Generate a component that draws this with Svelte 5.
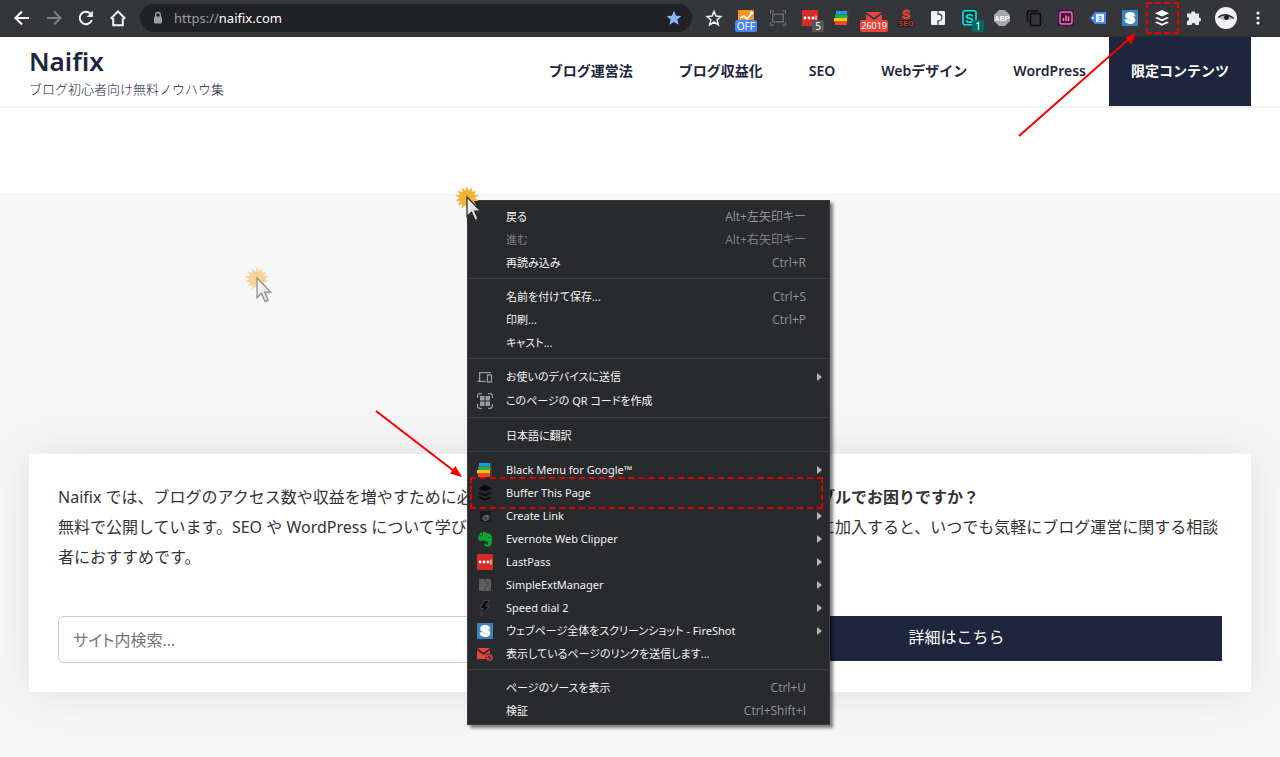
<script lang="ts">
  interface MenuItem {
    label: string;
    icon?: string;
    shortcut?: string;
    disabled?: boolean;
    submenu?: boolean;
    tall?: boolean;
    marked?: boolean;
  }

  const groups: MenuItem[][] = [
    [
      { label: "戻る", shortcut: "Alt+左矢印キー" },
      { label: "進む", shortcut: "Alt+右矢印キー", disabled: true },
      { label: "再読み込み", shortcut: "Ctrl+R" },
    ],
    [
      { label: "名前を付けて保存...", shortcut: "Ctrl+S" },
      { label: "印刷...", shortcut: "Ctrl+P" },
      { label: "キャスト..." },
    ],
    [
      { label: "お使いのデバイスに送信", icon: "devices", submenu: true },
      { label: "このページの QR コードを作成", icon: "qr", tall: true },
    ],
    [{ label: "日本語に翻訳" }],
    [
      { label: "Black Menu for Google™", icon: "blackmenu", submenu: true },
      { label: "Buffer This Page", icon: "buffer", marked: true },
      { label: "Create Link", icon: "createlink", submenu: true },
      { label: "Evernote Web Clipper", icon: "evernote", submenu: true },
      { label: "LastPass", icon: "lastpass", submenu: true },
      { label: "SimpleExtManager", icon: "extmanager", submenu: true },
      { label: "Speed dial 2", icon: "speeddial", submenu: true },
      { label: "ウェブページ全体をスクリーンショット - FireShot", icon: "fireshot", submenu: true },
      { label: "表示しているページのリンクを送信します...", icon: "mailblock" },
    ],
    [
      { label: "ページのソースを表示", shortcut: "Ctrl+U" },
      { label: "検証", shortcut: "Ctrl+Shift+I" },
    ],
  ];

  const navButtons = ["back", "forward", "reload", "home"];

  const extensions: { icon: string; badge?: string; tone?: string; marked?: boolean }[] = [
    { icon: "star" },
    { icon: "analytics", badge: "OFF", tone: "blue" },
    { icon: "capture" },
    { icon: "lastpass", badge: "5", tone: "gray" },
    { icon: "blackmenu" },
    { icon: "mail", badge: "26019", tone: "red" },
    { icon: "seo" },
    { icon: "extlight" },
    { icon: "similar", badge: "1", tone: "teal" },
    { icon: "abp" },
    { icon: "copy" },
    { icon: "stats" },
    { icon: "tag" },
    { icon: "fireshot" },
    { icon: "bufferlight", marked: true },
    { icon: "puzzle" },
    { icon: "avatar" },
    { icon: "more" },
  ];

  const links = ["ブログ運営法", "ブログ収益化", "SEO", "Webデザイン", "WordPress"];

  // Spiky burst behind the pointer
  const burst = Array.from({ length: 28 }, (_, i) => {
    const r = i % 2 ? 7.5 : 12;
    const a = (i * Math.PI) / 14;
    return `${(14 + r * Math.sin(a)).toFixed(1)},${(14 - r * Math.cos(a)).toFixed(1)}`;
  }).join(" ");
</script>

{#snippet glyph(name: string)}
  <svg class="glyph" viewBox="0 0 16 16" aria-hidden="true">
    {#if name === "back"}
      <path d="M15 8H2M8 1.5 1.5 8 8 14.5" fill="none" stroke="#fff" stroke-width="2" />
    {:else if name === "forward"}
      <path d="M1 8h13M8 1.5 14.5 8 8 14.5" fill="none" stroke="#808185" stroke-width="2" />
    {:else if name === "reload"}
      <path d="M13.8 10A6.2 6.2 0 1 1 12.4 3.6" fill="none" stroke="#f1f3f4" stroke-width="2" />
      <path d="M14.8.8V7H8.6z" fill="#f1f3f4" />
    {:else if name === "home"}
      <path d="M3.2 8v7.2h9.6V8M.8 8.8 8 1.4l7.2 7.4" fill="none" stroke="#f1f3f4" stroke-width="2" />
    {:else if name === "lock"}
      <rect x="4" y="6.5" width="8" height="7" rx="1" fill="#9aa0a6" />
      <path d="M5.700 7V4.800a2.300 2.300 0 0 1 4.600 0V7" fill="none" stroke="#9aa0a6" stroke-width="1.300" />
    {:else if name === "starfill"}
      <path d="m8 .8 2.1 4.9 5.3.4-4 3.5 1.2 5.2L8 12l-4.6 2.8 1.2-5.2-4-3.5 5.3-.4z" fill="#8ab4f8" />
    {:else if name === "star"}
      <path d="m8 1.4 1.900 4.700 5 .4-3.800 3.300 1.200 5L8 12l-4.300 2.800 1.200-5L1.100 6.500l5-.4z" fill="none" stroke="#f1f3f4" stroke-width="1.500" />
    {:else if name === "analytics"}
      <rect width="16" height="16" rx="1" fill="#f6931e" />
      <path d="m2 8 4-2 3 3 5-6" fill="none" stroke="#fff" stroke-width="1.8" />
      <circle cx="13.6" cy="3" r="1.7" fill="#fff" />
    {:else if name === "capture"}
      <path d="M.5 4V.8H4M12 .8h3.500V4M15.500 12v3.200H12M4 15.200H.5V12" fill="none" stroke="#6d6e71" stroke-width="1.200" />
      <rect x="2.700" y="4.200" width="10.600" height="7.600" fill="none" stroke="#6d6e71" stroke-width="1.400" />
    {:else if name === "lastpass"}
      <rect width="16" height="16" rx="1" fill="#d32d27" />
      <circle cx="3" cy="8" r="1.400" fill="#fff" />
      <circle cx="7" cy="8" r="1.400" fill="#fff" />
      <circle cx="11" cy="8" r="1.400" fill="#fff" />
      <path d="M14 5.500v5" stroke="#fff" stroke-width="1" />
    {:else if name === "blackmenu"}
      <rect x="3" y="1" width="12" height="14" rx="1" fill="#3c3d3e" />
      <path d="M2 1h11v3.500H2z" fill="#2196f3" />
      <path d="M1 4.500h12L14 8H1.500z" fill="#1fb141" />
      <path d="M0 8h13v3.500H0z" fill="#ffc107" />
      <path d="M1 11.500h12V15H1z" fill="#f4422f" />
    {:else if name === "mail"}
      <rect y="2" width="16" height="12" fill="#e8453c" />
      <path d="m0 3 8 6 8-6" fill="none" stroke="#35363a" stroke-width="1.600" />
    {:else if name === "mailblock"}
      <rect y="2" width="13" height="11" fill="#e8453c" />
      <path d="m0 3 6.500 5L13 3" fill="none" stroke="#292a2d" stroke-width="1.600" />
      <circle cx="12.500" cy="11.500" r="4" fill="#292a2d" />
      <circle cx="12.500" cy="11.500" r="2.600" fill="none" stroke="#e8453c" stroke-width="1.200" />
      <path d="m10.700 13.300 3.600-3.600" stroke="#e8453c" />
    {:else if name === "seo"}
      <text x="8" y="9" text-anchor="middle" font-size="12" font-weight="700" fill="#d9422f" stroke="#d9422f">S</text>
      <text x="8" y="15.500" text-anchor="middle" font-size="7" font-weight="700" fill="#d9422f" stroke="#111" stroke-width="1.500" paint-order="stroke">SEO</text>
    {:else if name === "extlight"}
      <rect x="1" y="1" width="14" height="14" rx="1" fill="#f1f3f4" />
      <path d="M8 1v3c3 0 4 1.500 4 3.500S10 11 8 11v4" fill="none" stroke="#45464a" stroke-width="1.300" />
    {:else if name === "extmanager"}
      <rect x="2" y="2" width="12" height="12" rx="1" fill="#5d5d5e" />
      <path d="M8 2v2c2 0 3 2 3 3.500S9.500 11 8 11v3" fill="none" stroke="#414244" stroke-width="1" />
    {:else if name === "similar"}
      <rect x="1" y=".8" width="13" height="14" rx="2" fill="#12383b" stroke="#11dfe2" stroke-width="1.600" />
      <text x="7.500" y="12.500" text-anchor="middle" font-size="13" font-weight="700" fill="#11e7e6">S</text>
    {:else if name === "abp"}
      <path d="M5 0h6l5 5v6l-5 5H5l-5-5V5z" fill="#a6a7a9" />
      <text x="8" y="10.500" text-anchor="middle" font-size="7" font-weight="700" fill="#fff">ABP</text>
    {:else if name === "copy"}
      <rect x="4.500" y="3.500" width="10" height="12" rx="1" fill="none" stroke="#0c0c0d" stroke-width="1.500" />
      <path d="M1.500 12V1H12" fill="none" stroke="#0c0c0d" stroke-width="1.500" />
    {:else if name === "stats"}
      <rect width="16" height="16" rx="1" fill="#4b0b55" />
      <rect x="2" y="2" width="12" height="12" rx="2" fill="none" stroke="#e57c8c" stroke-width="1.400" />
      <path d="M5.500 11V8M8 11V5.500M10.500 11V6.500" stroke="#f8a06c" stroke-width="1.400" />
    {:else if name === "tag"}
      <path d="M5 2h11v12H5L0 8z" fill="#4688f1" />
      <rect x="6" y="4" width="8" height="8" fill="#e8f0fe" />
      <circle cx="3" cy="8" r="1" fill="#fff" />
      <text x="10" y="10.700" text-anchor="middle" font-size="7" font-weight="700" fill="#4688f1">3</text>
    {:else if name === "fireshot"}
      <rect width="16" height="16" fill="#3f82bb" />
      <text x="8" y="13" text-anchor="middle" font-size="14" font-weight="700" fill="#fff" stroke="#fff" stroke-width="1.800">S</text>
    {:else if name === "buffer" || name === "bufferlight"}
      <g fill={name === "buffer" ? "#0b0b0c" : "#fff"}>
        <path d="m8 0 7 3.300-7 3.300-7-3.300z" />
        <path d="m1 7.900 2-1 5 2.400 5-2.400 2 1-7 3.300z" />
        <path d="m1 12.400 2-1 5 2.400 5-2.400 2 1L8 15.800z" />
      </g>
    {:else if name === "puzzle"}
      <path d="M5 3.500a2.200 2.200 0 0 1 4.400 0H13v4a2.100 2.100 0 0 1 0 4.200V15H9.500a2 2 0 0 0-4 0H1v-4a2 2 0 0 0 0-4V3.500z" fill="#e8eaed" />
    {:else if name === "more"}
      <circle cx="8" cy="3" r="1.600" fill="#f1f3f4" />
      <circle cx="8" cy="8" r="1.600" fill="#f1f3f4" />
      <circle cx="8" cy="13" r="1.600" fill="#f1f3f4" />
    {:else if name === "devices"}
      <path d="M2.600 12V3.600H14M.5 12.400H9" fill="none" stroke="#9a9b9e" stroke-width="1.300" />
      <rect x="10.500" y="6" width="4" height="7" fill="none" stroke="#9a9b9e" stroke-width="1.300" />
    {:else if name === "qr"}
      <path d="M.6 5V3Q.6.6 3 .6h2M11 .6h2q2.400 0 2.400 2.400v2M15.400 11v2q0 2.400-2.400 2.400h-2M5 15.400H3Q.6 15.400.6 13v-2" fill="none" stroke="#9a9b9e" stroke-width="1.200" />
      <path d="M3 3h4.500v4.500H3zM8.500 3H13v4.500H8.500zM3 8.500h4.500V13H3zM8.500 8.500H13V13H8.500z" fill="#9a9b9e" />
    {:else if name === "createlink"}
      <rect x="3" y="3" width="11" height="11" rx="1" fill="#1a1b1c" />
      <text x="9" y="12" text-anchor="middle" font-size="8" fill="#98999b">@</text>
    {:else if name === "evernote"}
      <path d="M5 .8 1.200 4.500V7q0 3 3.300 3 2 0 2.300-1 .8 1.500 2.700 1.500 1.700 0 1.700 1.800 0 1.500-1.500 1.500-.7 0-.7-1.300H7.500q-.8 3.300 3.500 3.300 4 0 4-7.300 0-5.500-3-6L9.500 2Q8.500.3 5 .8z" fill="#07a82d" />
      <path d="M5.500 1v3.800H1.500" fill="none" stroke="#292a2d" stroke-width=".8" />
      <circle cx="12" cy="6.500" r=".8" fill="#292a2d" />
    {:else if name === "speeddial"}
      <path d="M7.500.5 3 8.500h3.500L4 15.500 12.500 6H9l3.500-5.500z" fill="#0e0e0f" stroke="#606164" stroke-width=".6" />
    {/if}
  </svg>
{/snippet}

{#snippet pointer()}
  <svg viewBox="0 0 32 42" width="32" height="42" aria-hidden="true">
    <defs>
      <linearGradient id="steel" x1="0" y1="0" x2="1" y2="1">
        <stop offset="0" stop-color="#fff" />
        <stop offset="1" stop-color="#bbb" />
      </linearGradient>
    </defs>
    <polygon points={burst} fill="#f5b335" />
    <path d="M14 14v20l5-4 3.500 8 3.500-1.500-3.500-8H29z" fill="#777" opacity=".35" />
    <path d="M14 13v19.500l4.500-4.200 3.500 8.200 3.200-1.400-3.500-8h6z" fill="url(#steel)" stroke="#222" stroke-width="1.200" />
  </svg>
{/snippet}

<div class="window">
  <div class="toolbar">
    {#each navButtons as name}
      <button class="tool" aria-label={name}>{@render glyph(name)}</button>
    {/each}
    <div class="omnibox">
      {@render glyph("lock")}
      <span class="url">https://<b>naifix.com</b></span>
      <button class="bookmark" aria-label="bookmark">{@render glyph("starfill")}</button>
    </div>
    {#each extensions as ext}
      <button class="tool" class:marked={ext.marked} aria-label={ext.icon}>
        {#if ext.icon === "avatar"}
          <svg class="avatar" viewBox="0 0 22 22" aria-hidden="true">
            <circle cx="11" cy="11" r="11" fill="#f4f2f2" />
            <path d="M4 11q7-5 14 0-7 4-14 0z" fill="#b9a3a5" />
            <path d="M3 10.500q7-6 16 1" fill="none" stroke="#25202b" stroke-width="1.400" />
            <circle cx="11.500" cy="10.500" r="2.400" fill="#17193b" />
          </svg>
        {:else}
          {@render glyph(ext.icon)}
        {/if}
        {#if ext.badge}
          <span class="badge {ext.tone}">{ext.badge}</span>
        {/if}
      </button>
    {/each}
  </div>

  <header class="site-header">
    <div class="brand">
      <a class="logo" href="#top">Naifix</a>
      <span class="tagline">ブログ初心者向け無料ノウハウ集</span>
    </div>
    <nav>
      {#each links as link}
        <a href="#{link}">{link}</a>
      {/each}
      <a class="cta" href="#members">限定コンテンツ</a>
    </nav>
  </header>

  <main>
    <section class="card">
      <div class="column">
        <p>
          Naifix では、ブログのアクセス数や収益を増やすために必要なノウハウを<br />
          無料で公開しています。SEO や WordPress について学びたい初心<br />
          者におすすめです。
        </p>
        <input type="search" placeholder="サイト内検索..." aria-label="サイト内検索" />
      </div>
      <div class="column">
        <p>
          <strong>ブログ運営のトラブルでお困りですか？</strong><br />
          オンラインサロンに加入すると、いつでも気軽にブログ運営に関する相談<br />
          ができます。
        </p>
        <a class="more" href="#salon">詳細はこちら</a>
      </div>
    </section>
  </main>

  <div class="menu" role="menu">
    {#each groups as group, i}
      {#if i > 0}
        <hr />
      {/if}
      {#each group as item}
        <button
          class="item"
          class:tall={item.tall}
          class:marked={item.marked}
          role="menuitem"
          disabled={item.disabled}
        >
          <span class="slot">
            {#if item.icon}{@render glyph(item.icon)}{/if}
          </span>
          <span class="label">{item.label}</span>
          {#if item.shortcut}
            <span class="shortcut">{item.shortcut}</span>
          {/if}
          {#if item.submenu}
            <span class="caret"></span>
          {/if}
        </button>
      {/each}
    {/each}
  </div>

  <div class="pointer">{@render pointer()}</div>
  <div class="pointer faded">{@render pointer()}</div>

  <svg class="arrow to-toolbar" viewBox="0 0 120 106" aria-hidden="true">
    <path d="M1 105 111 8" stroke="#f60000" stroke-width="2" />
    <path d="M118 2l-4.500 11.500-6-7z" fill="#f60000" />
  </svg>
  <svg class="arrow to-menu" viewBox="0 0 88 68" aria-hidden="true">
    <path d="M1 1l78 60" stroke="#f60000" stroke-width="2" />
    <path d="M87 67 75 63.500l5.500-7.500z" fill="#f60000" />
  </svg>
</div>

<style>
  :global(body) {
    margin: 0;
    background: #f7f7f7;
  }

  .window {
    position: relative;
    overflow: hidden;
    min-height: 100vh;
    font-family: "Noto Sans", "Noto Sans CJK JP", sans-serif;
    color: #333;
  }

  button {
    border: 0;
    padding: 0;
    background: none;
    font: inherit;
    color: inherit;
  }

  .glyph {
    display: block;
    width: 16px;
    height: 16px;
    flex: none;
    overflow: visible;
    font-family: "Liberation Sans", sans-serif;
  }

  /* browser toolbar */

  .toolbar {
    display: flex;
    align-items: center;
    height: 37px;
    box-sizing: border-box;
    padding: 0 6px;
    background: #35363a;
    border-bottom: 1px solid #2b2c2f;
  }

  .tool {
    position: relative;
    display: flex;
    align-items: center;
    justify-content: center;
    flex: none;
    width: 32px;
    height: 32px;
  }

  .tool.marked::after {
    content: "";
    position: absolute;
    inset: 0 -1px 0 0;
    border: 2px dashed #e60000;
    border-radius: 2px;
  }

  .avatar {
    width: 22px;
    height: 22px;
  }

  .badge {
    position: absolute;
    right: 2px;
    bottom: 2px;
    min-width: 6px;
    padding: 0 3px;
    border-radius: 2px;
    font-size: 10px;
    line-height: 12px;
    text-align: center;
    color: #fff;
  }

  .badge.blue {
    right: 5px;
    padding: 0 2px;
    background: #4285f4;
  }

  .badge.gray {
    background: #555657;
  }

  .badge.red {
    padding: 0 1px;
    font-size: 9px;
    background: #e8453c;
  }

  .badge.teal {
    background: #00695f;
  }

  .omnibox {
    display: flex;
    align-items: center;
    flex: 1;
    height: 28px;
    box-sizing: border-box;
    margin: 0 6px;
    padding: 0 10px;
    border-radius: 14px;
    background: #202124;
  }

  .url {
    flex: 1;
    margin-left: 8px;
    font-size: 13px;
    color: #9aa0a6;
  }

  .url b {
    font-weight: 400;
    color: #fff;
  }

  /* site */

  .site-header {
    display: flex;
    justify-content: space-between;
    height: 69px;
    padding: 0 29px;
    background: #fff;
    border-bottom: 2px solid #f2f2f2;
    color: #1d263d;
  }

  .brand {
    display: flex;
    flex-direction: column;
    padding-top: 9px;
  }

  .logo {
    font-size: 26px;
    line-height: 30px;
    font-weight: 600;
    color: inherit;
    text-decoration: none;
  }

  .tagline {
    font-family: "Noto Sans CJK JP", sans-serif;
    font-size: 13px;
    line-height: 26px;
    font-weight: 300;
  }

  nav {
    display: flex;
  }

  nav a {
    padding: 0 23px;
    font-size: 14px;
    line-height: 68px;
    font-weight: 600;
    white-space: nowrap;
    color: inherit;
    text-decoration: none;
  }

  nav .cta {
    padding: 0 22px;
    background: #1d263d;
    font-weight: 700;
    color: #fff;
  }

  main {
    padding: 261px 29px 65px;
    border-top: 85px solid #fff;
    background: #f7f7f7;
  }

  .card {
    display: grid;
    grid-template-columns: 1fr 1fr;
    gap: 102px;
    padding: 28px 29px 29px;
    background: #fff;
    box-shadow: 0 0 50px rgba(0, 0, 0, 0.1);
  }

  .column {
    display: flex;
    flex-direction: column;
    gap: 44px;
    min-width: 0;
  }

  .card p {
    margin: 0;
    font-size: 16px;
    line-height: 30px;
    white-space: nowrap;
  }

  .card strong {
    font-weight: 700;
  }

  input {
    height: 47px;
    box-sizing: border-box;
    padding: 0 14px;
    border: 1px solid #ccc;
    border-radius: 6px;
    background: #fff;
    font: inherit;
    font-size: 16px;
    font-feature-settings: "palt";
  }

  input::placeholder {
    color: #757575;
  }

  .more {
    margin-bottom: 2px;
    padding-bottom: 2px;
    background: #1d263d;
    font-size: 16px;
    line-height: 43px;
    text-align: center;
    color: #fff;
    text-decoration: none;
  }

  /* context menu */

  .menu {
    position: absolute;
    left: 467px;
    top: 200px;
    width: 363px;
    box-sizing: border-box;
    padding: 4px 1px 2px;
    border: 1px solid #3b3c3f;
    background: #292a2d;
    box-shadow: 3px 3px 3px rgba(0, 0, 0, 0.5);
    font-family: "Noto Sans", "Noto Sans CJK JP", sans-serif;
    font-feature-settings: "palt";
    color: #f1f3f4;
  }

  hr {
    height: 1px;
    margin: 4px 0 6px;
    border: 0;
    background: #3f4043;
  }

  .item {
    position: relative;
    display: flex;
    align-items: center;
    width: 100%;
    height: 23px;
    padding: 0 6px 0 8px;
    line-height: 23px;
    text-align: left;
    white-space: nowrap;
  }

  .item.tall {
    height: 25px;
  }

  .item:disabled {
    color: #7f8185;
  }

  .item.marked::after {
    content: "";
    position: absolute;
    inset: -4px 5px -5px 1px;
    border: 2px dashed #e00000;
    border-radius: 2px;
  }

  .slot {
    flex: none;
    width: 29px;
  }

  .label {
    flex: 1;
    font-size: 11px;
  }

  .shortcut {
    margin-right: 16px;
    font-family: "Open Sans", "Noto Sans CJK JP", sans-serif;
    font-size: 12px;
    color: #929598;
  }

  .item:disabled .shortcut {
    color: #7f8185;
  }

  .caret {
    border: 4px solid transparent;
    border-left: 5px solid #b5b6b8;
    border-right: 0;
  }

  /* annotations */

  .pointer {
    position: absolute;
    left: 453px;
    top: 184px;
    height: 42px;
  }

  .pointer.faded {
    left: 243px;
    top: 265px;
    opacity: 0.5;
  }

  .arrow {
    position: absolute;
    pointer-events: none;
  }

  .to-toolbar {
    top: 31px;
    right: 142px;
    width: 120px;
    height: 106px;
  }

  .to-menu {
    left: 375px;
    top: 410px;
    width: 88px;
    height: 68px;
  }
</style>
